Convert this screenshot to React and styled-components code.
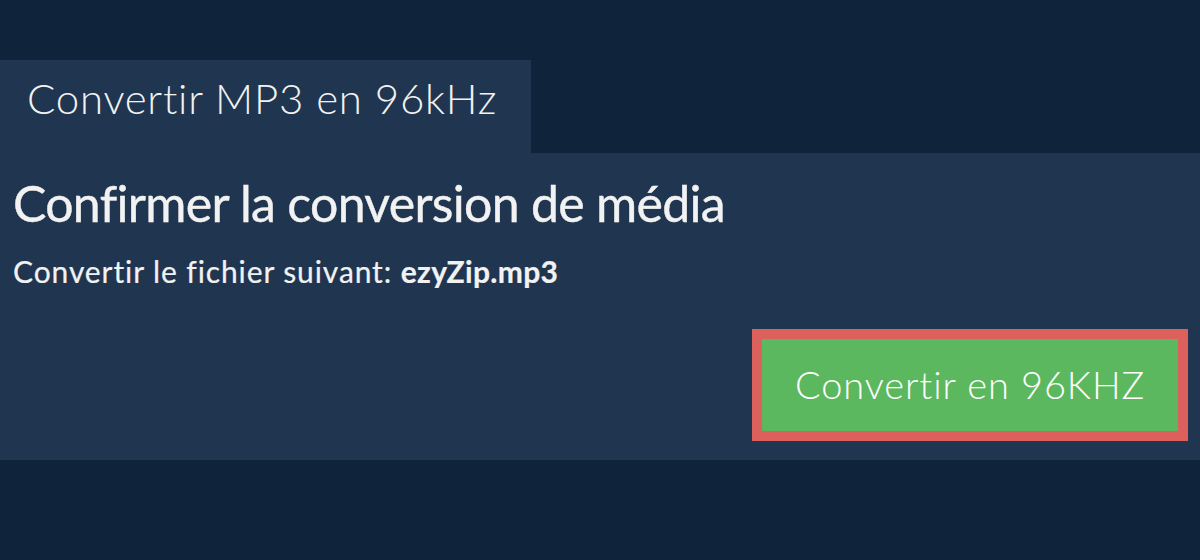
import React from "react";
import styled, {createGlobalStyle} from "styled-components";

const GlobalStyle = createGlobalStyle`
  html, body {
    margin: 0;
    padding: 0;
    background: #0f233a;
    font-family: Lato, "Open Sans", sans-serif;
  }
`;

const Page = styled.div`
  width: 1200px;
  height: 560px;
  padding-top: 60px;
  box-sizing: border-box;
  background: #0f233a;
`;

const Tab = styled.div`
  width: 531px;
  height: 93px;
  box-sizing: border-box;
  padding: 13px 0 0 27px;
  background: #203650;
  color: #f2f2f2;
  font-size: 42px;
  line-height: 1.2;
  font-weight: 300;
  letter-spacing: 0.75px;
`;

const Panel = styled.section`
  background: #203650;
  height: 307px;
  box-sizing: border-box;
  padding: 20px 12px 0 13px;
  display: flex;
  flex-direction: column;
`;

const Title = styled.h1`
  margin: 0;
  font-size: 50px;
  font-weight: 400;
  line-height: 60px;
  letter-spacing: -0.7px;
  color: #f2f2f2;
  -webkit-text-stroke: 0.4px #f2f2f2;
`;

const FileLine = styled.p`
  margin: 20px 0 0;
  font-size: 30px;
  line-height: 36px;
  letter-spacing: 0.9px;
  color: #f2f2f2;
  -webkit-text-stroke: 0.2px #f2f2f2;

  strong {
    font-weight: 700;
    letter-spacing: 0.3px;
  }
`;

const Actions = styled.div`
  margin-top: 40px;
  display: flex;
  justify-content: flex-end;
`;

const ConvertButton = styled.button`
  width: 436px;
  height: 112px;
  padding: 0;
  box-sizing: border-box;
  border: 10px solid #dc605c;
  background: #5cb85f;
  color: #fff;
  font-family: inherit;
  font-size: 38px;
  line-height: 1.2;
  font-weight: 300;
  letter-spacing: 0.9px;
  cursor: pointer;
`;

export default function App() {
  return (
    <Page>
      <GlobalStyle />
      <Tab>Convertir MP3 en 96kHz</Tab>
      <Panel>
        <Title>Confirmer la conversion de média</Title>
        <FileLine>
          Convertir le fichier suivant: <strong>ezyZip.mp3</strong>
        </FileLine>
        <Actions>
          <ConvertButton>Convertir en 96KHZ</ConvertButton>
        </Actions>
      </Panel>
    </Page>
  );
}
